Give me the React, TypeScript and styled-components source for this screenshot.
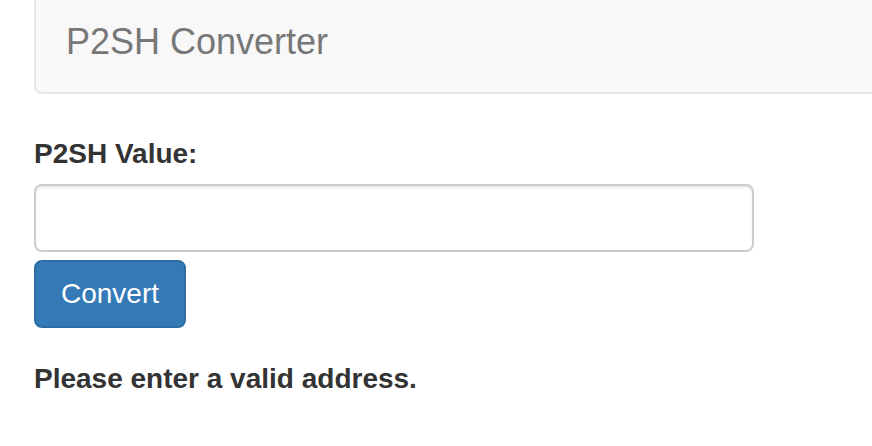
import React from "react";
import styled, { createGlobalStyle } from "styled-components";

const Global = createGlobalStyle`
  html, body { margin: 0; padding: 0; background: #fff; overflow: hidden; }
  body { font-family: "Liberation Sans", Arial, Helvetica, sans-serif; color: #333; }
  * { box-sizing: border-box; }
`;

const Page = styled.div`
  padding-left: 34px;
  width: 900px;
`;

const Navbar = styled.nav`
  margin-top: -10px;
  height: 104px;
  border: 2px solid #e7e7e7;
  border-radius: 8px;
  background: #f8f8f8;
  margin-bottom: 40px;
`;

const Brand = styled.div`
  padding: 30px 30px;
  height: 100px;
  font-size: 36px;
  line-height: 40px;
  color: #777;
`;

const Label = styled.label`
  display: block;
  font-size: 28px;
  line-height: 40px;
  font-weight: bold;
  margin-bottom: 10px;
`;

const Input = styled.input`
  display: block;
  width: 720px;
  height: 68px;
  padding: 12px 24px;
  font-size: 28px;
  font-family: inherit;
  color: #555;
  background: #fff;
  border: 2px solid #ccc;
  border-radius: 8px;
  box-shadow: inset 0 2px 2px rgba(0, 0, 0, 0.075);
  outline: none;
`;

const Button = styled.button`
  display: block;
  margin-top: 8px;
  height: 68px;
  width: 152px;
  padding: 12px 24px;
  font-size: 28px;
  line-height: 40px;
  font-family: inherit;
  color: #fff;
  background: #337ab7;
  border: 2px solid #2e6da4;
  border-radius: 8px;
  cursor: pointer;
`;

const Message = styled.p`
  margin: 31px 0 0;
  font-size: 28px;
  line-height: 40px;
  font-weight: bold;
`;

export default function App() {
  return (
    <>
      <Global />
      <Page>
        <Navbar>
          <Brand>P2SH Converter</Brand>
        </Navbar>
        <Label htmlFor="p2sh">P2SH Value:</Label>
        <Input id="p2sh" type="text" />
        <Button type="button">Convert</Button>
        <Message>Please enter a valid address.</Message>
      </Page>
    </>
  );
}
